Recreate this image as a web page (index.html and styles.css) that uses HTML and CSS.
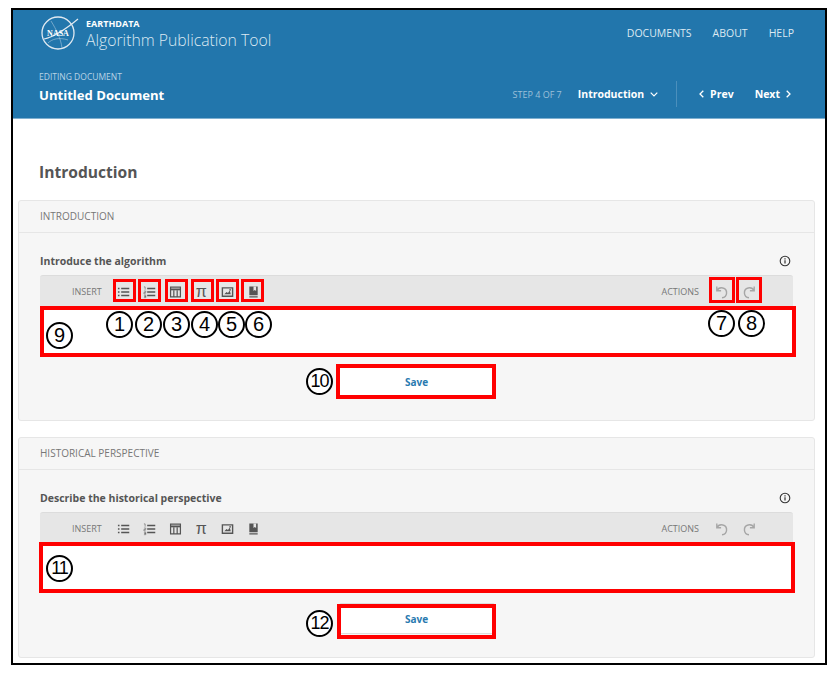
FILE: index.html
```html
<!doctype html>
<html lang="en">
<head>
    <meta charset="utf-8">
    <title>Algorithm Publication Tool</title>
    <link rel="stylesheet" href="styles.css">
</head>
<body>
    <svg class="sprites" width="0" height="0" aria-hidden="true">
        <symbol id="i-ul" viewBox="0 0 14 14">
            <path d="M1 3.300h1.700M1 7h1.700M1 10.700h1.700M4.500 3.300h8.700M4.500 7h8.700M4.500 10.700h8.700" fill="none" stroke="currentColor" stroke-width="1.500"/>
        </symbol>
        <symbol id="i-ol" viewBox="0 0 14 14">
            <path d="M4.500 3.300h8.700M4.500 7h8.700M4.500 10.700h8.700" fill="none" stroke="currentColor" stroke-width="1.500"/>
            <path d="M1 1.500h1.300v3M1 6h2v1.500H1v1.500h2M1 10.500h2v1.300H1.500h1.500v1.300H1" fill="none" stroke="currentColor" stroke-width=".6"/>
        </symbol>
        <symbol id="i-table" viewBox="0 0 14 14">
            <path d="M1.700 1.700h10.600v10.600H1.700zM5.200 5v7.300M8.800 5v7.300" fill="none" stroke="currentColor" stroke-width="1.300"/>
            <path d="M1.700 4.200h10.600" fill="none" stroke="currentColor" stroke-width="2"/>
        </symbol>
        <symbol id="i-image" viewBox="0 0 14 14">
            <path d="M1.500 2.500h11v9h-11z" fill="none" stroke="currentColor" stroke-width="1.500"/>
            <path d="M3.500 9.500l2.500-2.500 1.500 1 2-2.500 1 4z" fill="currentColor"/>
            <circle cx="9.800" cy="4.800" r=".9" fill="currentColor"/>
        </symbol>
        <symbol id="i-book" viewBox="0 0 14 14">
            <path d="M2.500 1h9v9.500h-9zM2.500 11.500h9V13h-9z" fill="currentColor"/>
            <path d="M7 1h2.800v5L8.400 4.800 7 6z" fill="#e6e6e6"/>
        </symbol>
        <symbol id="i-undo" viewBox="0 0 14 14">
            <path d="M1.800 1.500v4.300h4.300M2 5.800A5 5 0 1 1 7 12.800" fill="none" stroke="currentColor" stroke-width="1.400"/>
        </symbol>
        <symbol id="i-redo" viewBox="0 0 14 14">
            <path d="M12.200 1.500v4.300H7.900M12 5.800A5 5 0 1 0 7 12.800" fill="none" stroke="currentColor" stroke-width="1.400"/>
        </symbol>
        <symbol id="i-info" viewBox="0 0 12 12">
            <circle cx="6" cy="6" r="4.800" fill="none" stroke="currentColor" stroke-width="1.100"/>
            <path d="M6 5.200v3.300M6 3.200v1.200" fill="none" stroke="currentColor" stroke-width="1.200"/>
        </symbol>
    </svg>

    <div class="frame">
        <header class="site-header">
            <div class="top-row">
                <div class="brand">
                    <svg class="nasa-logo" viewBox="0 0 40 36" aria-hidden="true">
                        <circle cx="18" cy="18" r="16" fill="none" stroke="#dfe9f1" stroke-width="1.300"/>
                        <path d="M4 24C14 22 26 14 38 4" fill="none" stroke="#dfe9f1" stroke-width="1.200"/>
                        <path d="M11 6c5 8 10 18 11 27M8 28c4-4 11-6 20-3" fill="none" stroke="#a9c8de" stroke-width=".6"/>
                        <text x="18" y="21" class="nasa-text">NASA</text>
                    </svg>
                    <div>
                        <div class="brand-small">EARTHDATA</div>
                        <div class="brand-title">Algorithm Publication Tool</div>
                    </div>
                </div>
                <nav class="top-nav">
                    <a>DOCUMENTS</a>
                    <a>ABOUT</a>
                    <a>HELP</a>
                </nav>
            </div>
            <div class="doc-row">
                <div>
                    <div class="doc-label">EDITING DOCUMENT</div>
                    <div class="doc-name">Untitled Document</div>
                </div>
                <div class="steps">
                    <span class="step-count">STEP 4 OF 7</span>
                    <span class="step-name">Introduction
                        <svg class="chev" viewBox="0 0 8 5"><path d="M.7.7L4 4l3.300-3.300"/></svg>
                    </span>
                    <span class="step-divider"></span>
                    <span class="step-link step-prev">
                        <svg class="chev-side" viewBox="0 0 5 8"><path d="M4.300.7L1 4l3.300 3.300"/></svg>
                        Prev
                    </span>
                    <span class="step-link step-next">
                        Next
                        <svg class="chev-side" viewBox="0 0 5 8"><path d="M.7.7L4 4 .7 7.300"/></svg>
                    </span>
                </div>
            </div>
        </header>

        <main class="content">
            <h1>Introduction</h1>

            <section class="panel">
                <h2 class="panel-title">INTRODUCTION</h2>
                <div class="panel-body">
                    <div class="field-label">
                        <span>Introduce the algorithm</span>
                        <svg class="info"><use href="#i-info"/></svg>
                    </div>
                    <div class="toolbar">
                        <span class="tool-label insert-label">INSERT</span>
                        <svg class="tool"><use href="#i-ul"/></svg>
                        <svg class="tool"><use href="#i-ol"/></svg>
                        <svg class="tool"><use href="#i-table"/></svg>
                        <span class="tool tool-pi">π</span>
                        <svg class="tool"><use href="#i-image"/></svg>
                        <svg class="tool"><use href="#i-book"/></svg>
                        <span class="tool-label actions-label">ACTIONS</span>
                        <svg class="tool tool-off"><use href="#i-undo"/></svg>
                        <svg class="tool tool-off"><use href="#i-redo"/></svg>
                    </div>
                    <div class="editor"></div>
                    <button class="save" type="button">Save</button>
                </div>
            </section>

            <section class="panel">
                <h2 class="panel-title">HISTORICAL PERSPECTIVE</h2>
                <div class="panel-body">
                    <div class="field-label">
                        <span>Describe the historical perspective</span>
                        <svg class="info"><use href="#i-info"/></svg>
                    </div>
                    <div class="toolbar">
                        <span class="tool-label insert-label">INSERT</span>
                        <svg class="tool"><use href="#i-ul"/></svg>
                        <svg class="tool"><use href="#i-ol"/></svg>
                        <svg class="tool"><use href="#i-table"/></svg>
                        <span class="tool tool-pi">π</span>
                        <svg class="tool"><use href="#i-image"/></svg>
                        <svg class="tool"><use href="#i-book"/></svg>
                        <span class="tool-label actions-label">ACTIONS</span>
                        <svg class="tool tool-off"><use href="#i-undo"/></svg>
                        <svg class="tool tool-off"><use href="#i-redo"/></svg>
                    </div>
                    <div class="editor"></div>
                    <button class="save" type="button">Save</button>
                </div>
            </section>
        </main>

        <!-- red callouts drawn over the screenshot -->
        <div class="box box-t1"></div>
        <div class="box box-t2"></div>
        <div class="box box-t3"></div>
        <div class="box box-t4"></div>
        <div class="box box-t5"></div>
        <div class="box box-t6"></div>
        <div class="box box-t7"></div>
        <div class="box box-t8"></div>
        <div class="box box-big box-ed1"></div>
        <div class="box box-big box-save1"></div>
        <div class="box box-big box-ed2"></div>
        <div class="box box-big box-save2"></div>

        <div class="num num-1">1</div>
        <div class="num num-2">2</div>
        <div class="num num-3">3</div>
        <div class="num num-4">4</div>
        <div class="num num-5">5</div>
        <div class="num num-6">6</div>
        <div class="num num-7">7</div>
        <div class="num num-8">8</div>
        <div class="num num-9">9</div>
        <div class="num num-two num-10">10</div>
        <div class="num num-two num-11">11</div>
        <div class="num num-two num-12">12</div>
    </div>
</body>
</html>
```

FILE: styles.css
```css
body {
    font-family: "Open Sans", Arial, sans-serif;
    margin: 0;
    padding: 0;
    background: #fff;
}
.sprites {
    position: absolute;
}
.frame {
    position: relative;
    box-sizing: border-box;
    width: 816px;
    height: 657px;
    margin: 8px 0 0 11px;
    border: 2px solid #000;
    background: #fff;
}

/* header */
.site-header {
    height: 108px;
    background: #2276ac;
    border-bottom: 1px solid #7fb0d0;
    box-sizing: content-box;
    color: #fff;
}
.top-row {
    display: flex;
    justify-content: space-between;
    height: 56px;
    padding: 5px 31px 0 27px;
    box-sizing: border-box;
}
.brand {
    display: flex;
    gap: 6px;
}
.nasa-logo {
    width: 40px;
    height: 36px;
}
.nasa-text {
    font-family: "Liberation Serif", serif;
    font-size: 8px;
    font-weight: bold;
    fill: #fff;
    text-anchor: middle;
}
.brand-small {
    font-size: 9px;
    font-weight: 700;
    line-height: 12px;
    margin-top: 3px;
}
.brand-title {
    font-size: 15.750px;
    font-weight: 300;
    line-height: 21px;
    color: #dce9f2;
}
.top-nav {
    display: flex;
    gap: 21px;
    padding-top: 11px;
    font-size: 10.500px;
    line-height: 14px;
    color: #dce9f2;
}
.doc-row {
    display: flex;
    justify-content: space-between;
    padding: 0 34px 0 26px;
}
.doc-label {
    font-size: 8.500px;
    line-height: 12px;
    margin-top: 5px;
    color: #b9d3e5;
}
.doc-name {
    font-size: 13.100px;
    font-weight: 700;
    line-height: 18px;
    margin-top: 3px;
}
.steps {
    display: flex;
    align-items: center;
    height: 26px;
    margin-top: 15px;
    font-size: 10.500px;
    font-weight: 700;
}
.step-count {
    font-size: 9px;
    font-weight: 400;
    color: #9cc0d9;
    margin-right: 16px;
}
.step-name {
    display: flex;
    align-items: center;
    gap: 6px;
}
.step-divider {
    width: 1px;
    height: 26px;
    background: #4b8fbc;
    margin: 0 22px 0 18px;
}
.step-link {
    display: flex;
    align-items: center;
    gap: 6px;
}
.step-next {
    margin-left: 21px;
}
.chev {
    width: 8px;
    height: 5px;
    fill: none;
    stroke: #fff;
    stroke-width: 1.200;
}
.chev-side {
    width: 5px;
    height: 8px;
    fill: none;
    stroke: #fff;
    stroke-width: 1.300;
}

/* content */
.content {
    padding: 0 10px 0 5px;
}
h1 {
    font-size: 15.600px;
    font-weight: 700;
    line-height: 22px;
    color: #555;
    margin: 0;
    padding: 42px 0 17px 21px;
}
.panel {
    box-sizing: border-box;
    height: 221px;
    margin-bottom: 16px;
    background: #f6f6f6;
    border: 1px solid #e6e6e6;
    border-radius: 3px;
}
.panel-title {
    height: 31px;
    margin: 0;
    padding-left: 21px;
    font-size: 10px;
    font-weight: 400;
    line-height: 30px;
    color: #777;
    border-bottom: 1px solid #e6e6e6;
}
.panel-body {
    padding: 0 21px;
}
.field-label {
    display: flex;
    justify-content: space-between;
    align-items: center;
    height: 14px;
    padding-top: 21px;
    padding-bottom: 7px;
    font-size: 10.500px;
    font-weight: 700;
    color: #555;
}
.info {
    width: 12px;
    height: 12px;
    margin-right: 2px;
    color: #333;
}

/* editor */
.toolbar {
    display: flex;
    align-items: center;
    box-sizing: border-box;
    height: 31px;
    padding-top: 1px;
    background: #e6e6e6;
    border-top: 1px solid #dcdcdc;
    border-radius: 3px 3px 0 0;
    color: #555;
}
.tool-label {
    font-size: 9px;
    color: #777;
}
.insert-label {
    margin: 0 15px 0 32px;
}
.actions-label {
    margin: 0 15px 0 auto;
}
.tool {
    width: 13px;
    height: 14px;
    margin-right: 13px;
}
.tool-pi {
    font-family: "Liberation Sans", sans-serif;
    font-size: 16px;
    line-height: 14px;
    text-align: center;
}
.tool-off {
    width: 14px;
    margin-right: 12px;
    color: #a6a6a6;
    margin-left: 1px;
}
.tool-off:last-child {
    margin-right: 37px;
}
.editor {
    height: 50px;
    background: #fff;
}
.save {
    display: block;
    width: 156px;
    height: 31px;
    margin: 10px auto 0;
    padding: 0;
    background: #fff;
    border: 1px solid #ddd;
    border-radius: 2px;
    font-family: inherit;
    font-size: 10px;
    font-weight: 700;
    color: #2a7ab0;
}

/* callouts: offsets are from the frame's inner corner (13, 10) */
.box {
    position: absolute;
    box-sizing: border-box;
    width: 23px;
    height: 23px;
    border: 3px solid #f00;
}
.box-t1 { left: 100px; top: 269px; }
.box-t2 { left: 125px; top: 269px; }
.box-t3 { left: 152px; top: 269px; }
.box-t4 { left: 178px; top: 269px; }
.box-t5 { left: 203px; top: 269px; }
.box-t6 { left: 228px; top: 269px; }
.box-t7 { left: 696px; top: 267px; width: 26px; height: 26px; }
.box-t8 { left: 723px; top: 267px; width: 26px; height: 26px; }
.box-big {
    border-width: 4px;
}
.box-ed1 { left: 27px; top: 296px; width: 756px; height: 51px; }
.box-save1 { left: 323px; top: 354px; width: 160px; height: 35px; }
.box-ed2 { left: 26px; top: 532px; width: 756px; height: 51px; }
.box-save2 { left: 324px; top: 594px; width: 159px; height: 35px; }

.num {
    position: absolute;
    box-sizing: border-box;
    width: 27px;
    height: 27px;
    border: 2px solid #000;
    border-radius: 50%;
    background: #fff;
    font-family: "Liberation Sans", Arial, sans-serif;
    font-size: 20px;
    line-height: 23px;
    text-align: center;
    color: #000;
}
.num-two {
    font-size: 18px;
    letter-spacing: -1px;
}
.num-1 { left: 93px; top: 301px; }
.num-2 { left: 122px; top: 301px; }
.num-3 { left: 150px; top: 301px; }
.num-4 { left: 178px; top: 301px; }
.num-5 { left: 205px; top: 301px; }
.num-6 { left: 232px; top: 301px; }
.num-7 { left: 695px; top: 300px; }
.num-8 { left: 725px; top: 300px; }
.num-9 { left: 33px; top: 312px; }
.num-10 { left: 293px; top: 358px; }
.num-11 { left: 33px; top: 545px; }
.num-12 { left: 293px; top: 600px; }
```
